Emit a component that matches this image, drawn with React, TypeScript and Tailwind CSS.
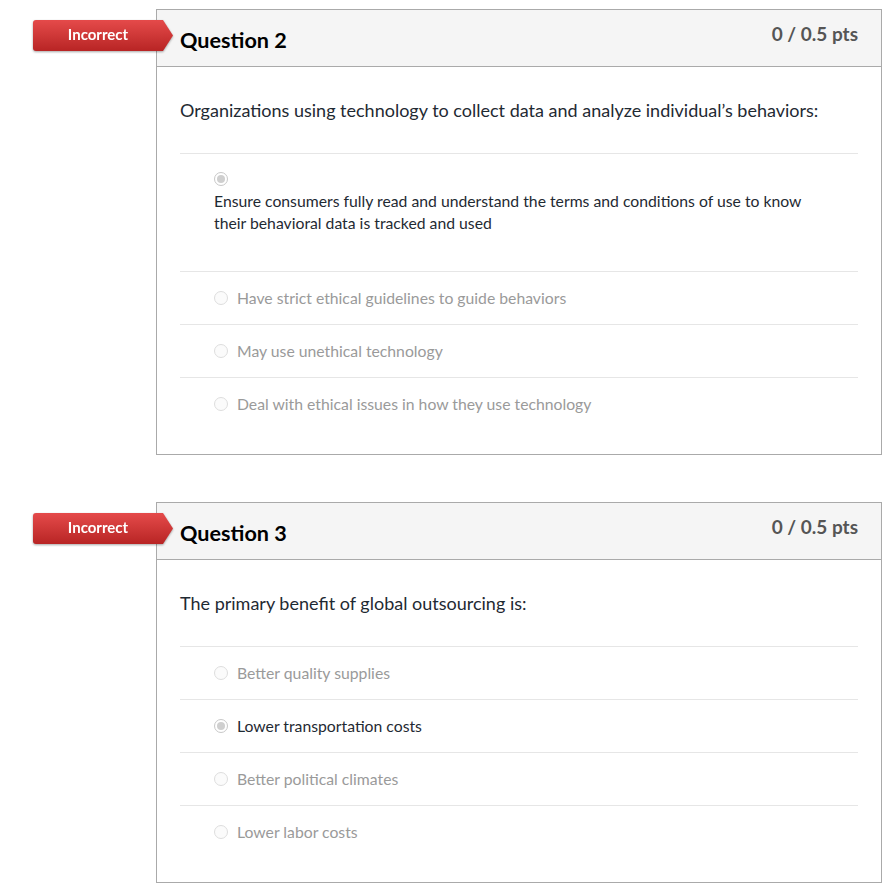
import React from "react";

interface Option {
  text: string;
  selected?: boolean;
  stacked?: boolean;
}

interface Question {
  number: number;
  prompt: string;
  options: Option[];
}

const questions: Question[] = [
  {
    number: 2,
    prompt: "Organizations using technology to collect data and analyze individual\u2019s behaviors:",
    options: [
      {
        text: "Ensure consumers fully read and understand the terms and conditions of use to know their behavioral data is tracked and used",
        selected: true,
        stacked: true,
      },
      { text: "Have strict ethical guidelines to guide behaviors" },
      { text: "May use unethical technology" },
      { text: "Deal with ethical issues in how they use technology" },
    ],
  },
  {
    number: 3,
    prompt: "The primary benefit of global outsourcing is:",
    options: [
      { text: "Better quality supplies" },
      { text: "Lower transportation costs", selected: true },
      { text: "Better political climates" },
      { text: "Lower labor costs" },
    ],
  },
];

function Radio({ checked }: { checked?: boolean }) {
  if (checked) {
    return (
      <span className="inline-flex h-[14px] w-[14px] shrink-0 items-center justify-center rounded-full border border-[#c8c8c8] bg-white">
        <span className="h-[8px] w-[8px] rounded-full bg-[#cfcfcf]" />
      </span>
    );
  }
  return <span className="inline-block h-[14px] w-[14px] shrink-0 rounded-full border border-[#dedede] bg-[#fbfbfb]" />;
}

function IncorrectBadge() {
  return (
    <div className="absolute left-[-124px] top-[10px] flex h-[31px] drop-shadow-[0_1px_1px_rgba(0,0,0,0.35)]">
      <div className="flex w-[130px] items-center justify-center rounded-l-[3px] bg-gradient-to-b from-[#e54a4a] to-[#b82424] pb-[2px] text-[15px] font-bold text-white">
        Incorrect
      </div>
      <svg width="10" height="31" viewBox="0 0 10 31" className="block">
        <defs>
          <linearGradient id="arrowGrad" x1="0" y1="0" x2="0" y2="1">
            <stop offset="0%" stopColor="#e54a4a" />
            <stop offset="100%" stopColor="#b82424" />
          </linearGradient>
        </defs>
        <polygon points="0,0 10,15.5 0,31" fill="url(#arrowGrad)" />
      </svg>
    </div>
  );
}

function QuestionCard({ q }: { q: Question }) {
  return (
    <div className="relative border border-[#aaaaaa] bg-white">
      <IncorrectBadge />
      <div className="flex h-[57px] items-start justify-between border-b border-[#aaaaaa] bg-[#f5f5f5] px-[23px]">
        <h2 className="pt-[15px] text-[21.6px] font-bold leading-[30px] text-black">Question {q.number}</h2>
        <div className="pt-[12px] text-[19px] font-bold leading-[24px] text-[#555555]">0 / 0.5 pts</div>
      </div>

      <div className="px-[23px] pb-[24px]">
        <p className="pt-[31px] pb-[31px] text-[18px] leading-[24px] text-[#1f2a33]">{q.prompt}</p>
        {q.options.map((o, i) =>
          o.stacked ? (
            <div key={i} className="border-t border-[#e6e6e6] pl-[34px] pr-[50px] pt-[17px] pb-[37px]">
              <div className="flex h-[16px] items-center">
                <Radio checked={o.selected} />
              </div>
              <div className="pt-[3px] text-[15.75px] leading-[22px] text-[#1f2a33]">{o.text}</div>
            </div>
          ) : (
            <div key={i} className="flex h-[53px] items-center gap-[9px] border-t border-[#e6e6e6] pl-[34px]">
              <Radio checked={o.selected} />
              <span className={`text-[15.75px] leading-[22px] ${o.selected ? "text-[#1f2a33]" : "text-[#9a9a9a]"}`}>
                {o.text}
              </span>
            </div>
          )
        )}
      </div>
    </div>
  );
}

export default function App() {
  return (
    <div className="min-h-screen bg-white font-['Lato','Noto_Sans',sans-serif]">
      <div className="ml-[156px] mr-[12px] flex flex-col gap-[47px] pt-[9px]">
        {questions.map((q) => (
          <QuestionCard key={q.number} q={q} />
        ))}
      </div>
    </div>
  );
}
